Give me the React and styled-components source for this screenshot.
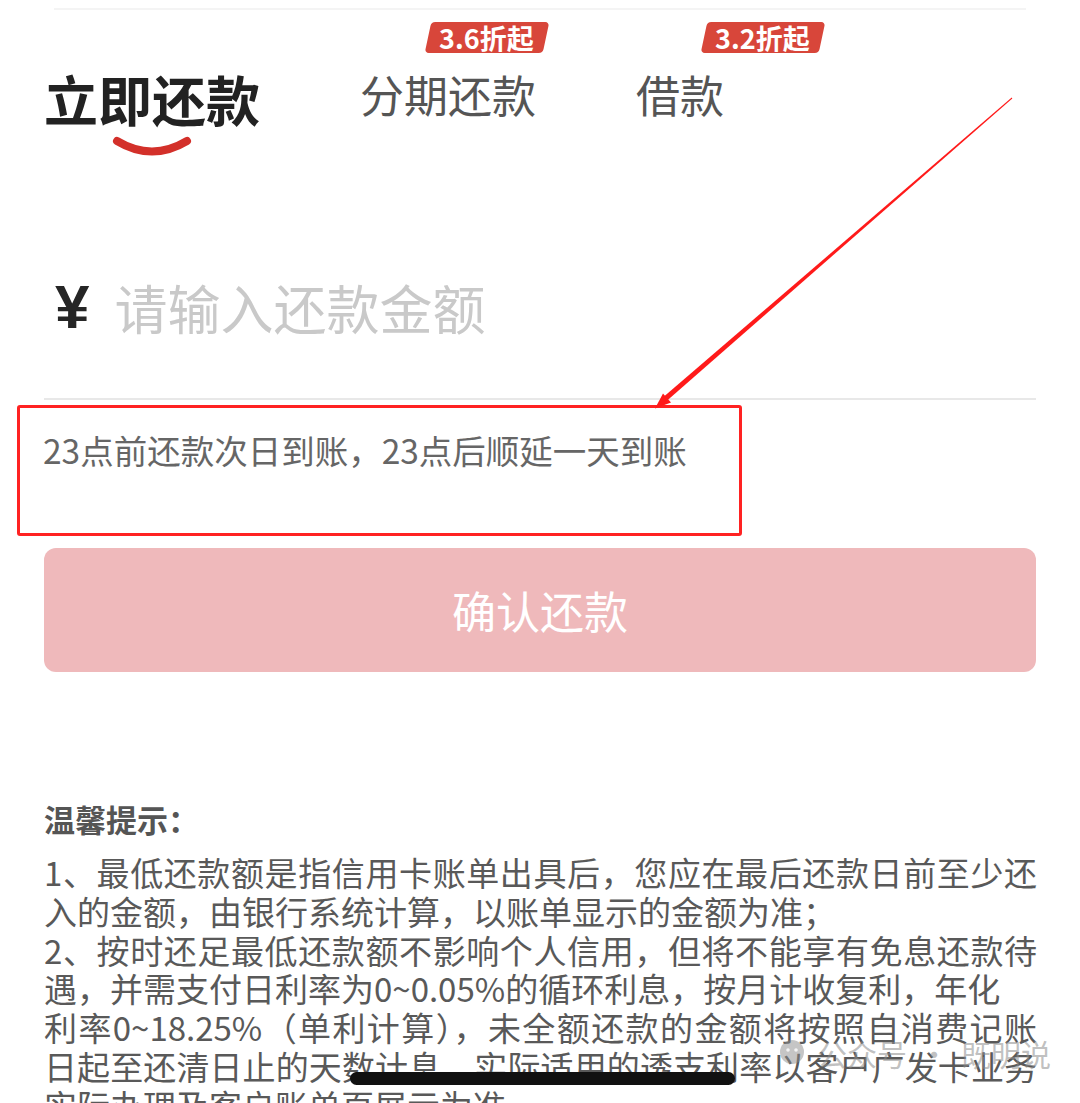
import React from 'react'
import styled, { createGlobalStyle } from 'styled-components'

const GlobalStyle = createGlobalStyle`
  * { box-sizing: border-box; }
  body {
    margin: 0;
    background: #fff;
    font-family: "Noto Sans CJK SC", "Noto Sans", sans-serif;
  }
`

// full: the line runs to the right edge before it wraps
const tips = [
  { text: '1、最低还款额是指信用卡账单出具后，您应在最后还款日前至少还', full: true },
  { text: '入的金额，由银行系统计算，以账单显示的金额为准；' },
  { text: '2、按时还足最低还款额不影响个人信用，但将不能享有免息还款待', full: true },
  { text: '遇，并需支付日利率为0~0.05%的循环利息，按月计收复利，年化' },
  { text: '利率0~18.25%（单利计算），未全额还款的金额将按照自消费记账', full: true },
  { text: '日起至还清日止的天数计息，实际适用的透支利率以客户广发卡业务', full: true },
  { text: '实际办理及客户账单页展示为准。' },
]

const App = () => {
  return (
    <>
      <GlobalStyle />
      <Page>
        <TopRule />
        <Tabs>
          <Tab>
            <TabLabel active>立即还款</TabLabel>
            <Smile viewBox="0 0 80 20">
              <path d="M5 5 Q40 26 75 5" />
            </Smile>
          </Tab>
          <Tab>
            <Badge><span>3.6折起</span></Badge>
            <TabLabel>分期还款</TabLabel>
          </Tab>
          <Tab>
            <Badge><span>3.2折起</span></Badge>
            <TabLabel>借款</TabLabel>
          </Tab>
        </Tabs>

        <InputRow>
          <Yen>¥</Yen>
          <AmountInput placeholder="请输入还款金额" />
        </InputRow>

        <HintBox>
          <Hint>23点前还款次日到账，23点后顺延一天到账</Hint>
        </HintBox>

        <ConfirmButton>确认还款</ConfirmButton>

        <TipsTitle>温馨提示：</TipsTitle>
        <TipsText>
          {tips.map((line) => (
            <TipLine key={line.text} full={line.full ? 1 : 0}>{line.text}</TipLine>
          ))}
        </TipsText>

        {/* annotation arrow drawn over the screenshot */}
        <Arrow viewBox="0 0 1080 1103">
          <polygon points="1011.7,97.6 1012.3,98.4 666.6,400.9 663.4,397.1" />
          <polygon points="655,408.5 671,402.5 663,393.5" />
        </Arrow>

        <Watermark>
          <svg width="28" height="28" viewBox="0 0 28 28">
            <circle cx="13" cy="13" r="12" className="face" />
            <circle cx="9" cy="11" r="1.8" className="eye" />
            <circle cx="17" cy="11" r="1.8" className="eye" />
          </svg>
          <span>公众号</span>
          <Dot>·</Dot>
          <span>既明说</span>
        </Watermark>
        <HomeBar />
      </Page>
    </>
  )
}

const Page = styled.div`
position: relative;
width: 1080px;
height: 1103px;
overflow: hidden;
padding: 0 44px;
`

const TopRule = styled.div`
height: 2px;
margin: 8px 10px 0;
background: #f4f4f4;
`

const Tabs = styled.div`
display: flex;
align-items: flex-start;
gap: 100px;
margin-top: 62px;
`

const Tab = styled.div`
position: relative;
display: flex;
flex-direction: column;
align-items: center;
`

const TabLabel = styled.div`
font-size: ${(p) => (p.active ? '54px' : '44px')};
font-weight: ${(p) => (p.active ? 700 : 400)};
color: ${(p) => (p.active ? '#222' : '#555')};
line-height: 1;
white-space: nowrap;
`

const Smile = styled.svg`
width: 80px;
height: 20px;
margin-top: 10px;
path {
  fill: none;
  stroke: #d3302a;
  stroke-width: 8;
  stroke-linecap: round;
}
`

const Badge = styled.div`
position: absolute;
left: 68px;
top: -50px;
height: 31px;
padding: 0 12px 0 11px;
background: #d8463a;
border-radius: 4px;
transform: skewX(-12deg);
display: flex;
align-items: center;
span {
  display: block;
  transform: skewX(12deg);
  color: #fff;
  font-family: "Noto Sans CJK SC", sans-serif;
  font-weight: 700;
  font-size: 27px;
  line-height: 1;
  white-space: nowrap;
}
`

const InputRow = styled.div`
display: flex;
align-items: center;
height: 139px;
margin-top: 105px;
padding: 0 0 45px 11px;
border-bottom: 2px solid #e8e8e8;
`

const Yen = styled.span`
font-family: "Liberation Sans", Arial, sans-serif;
font-weight: 700;
font-size: 62px;
line-height: 1;
color: #262626;
`

const AmountInput = styled.input`
flex: 1;
margin-left: 25px;
border: none;
outline: none;
padding: 0;
background: transparent;
font-family: "Noto Sans CJK SC", sans-serif;
font-size: 53px;
line-height: 1;
color: #333;
&::placeholder {
  color: #c9c9c9;
}
`

const HintBox = styled.div`
width: 725px;
height: 131px;
margin: 5px 0 0 -27px;
padding: 25px 0 0 23px;
border: 3px solid #ff2222;
border-radius: 3px;
`

const Hint = styled.p`
margin: 0;
font-size: 33.5px;
line-height: 1;
color: #666;
white-space: nowrap;
`

const ConfirmButton = styled.button`
display: flex;
align-items: center;
justify-content: center;
width: 100%;
height: 124px;
margin-top: 12px;
border: none;
border-radius: 12px;
background: #efb9bb;
color: #fff;
font-family: "Noto Sans CJK SC", sans-serif;
font-size: 44px;
font-weight: 400;
`

const TipsTitle = styled.h4`
margin: 131px 0 0;
font-size: 31px;
font-weight: 700;
line-height: 1;
color: #555;
`

const TipsText = styled.div`
margin-top: 19px;
width: 993px;
font-size: 33px;
line-height: 38.8px;
color: #595959;
`

const TipLine = styled.span`
display: block;
white-space: nowrap;
text-align: left;
text-align-last: ${(p) => (p.full ? 'justify' : 'left')};
text-justify: inter-character;
`

const Arrow = styled.svg`
position: absolute;
inset: 0;
width: 1080px;
height: 1103px;
pointer-events: none;
polygon {
  fill: #ff1a1a;
}
`

const Watermark = styled.div`
position: absolute;
left: 779px;
top: 1038px;
display: flex;
align-items: center;
gap: 10px;
font-size: 30px;
line-height: 1;
color: rgba(140, 140, 140, 0.55);
svg .face {
  fill: rgba(140, 140, 140, 0.5);
}
svg .eye {
  fill: rgba(255, 255, 255, 0.8);
}
`

const Dot = styled.span`
margin: 0 2px;
`

const HomeBar = styled.div`
position: absolute;
left: 350px;
top: 1072px;
width: 385px;
height: 13px;
border-radius: 7px;
background: #111;
`

export default App
